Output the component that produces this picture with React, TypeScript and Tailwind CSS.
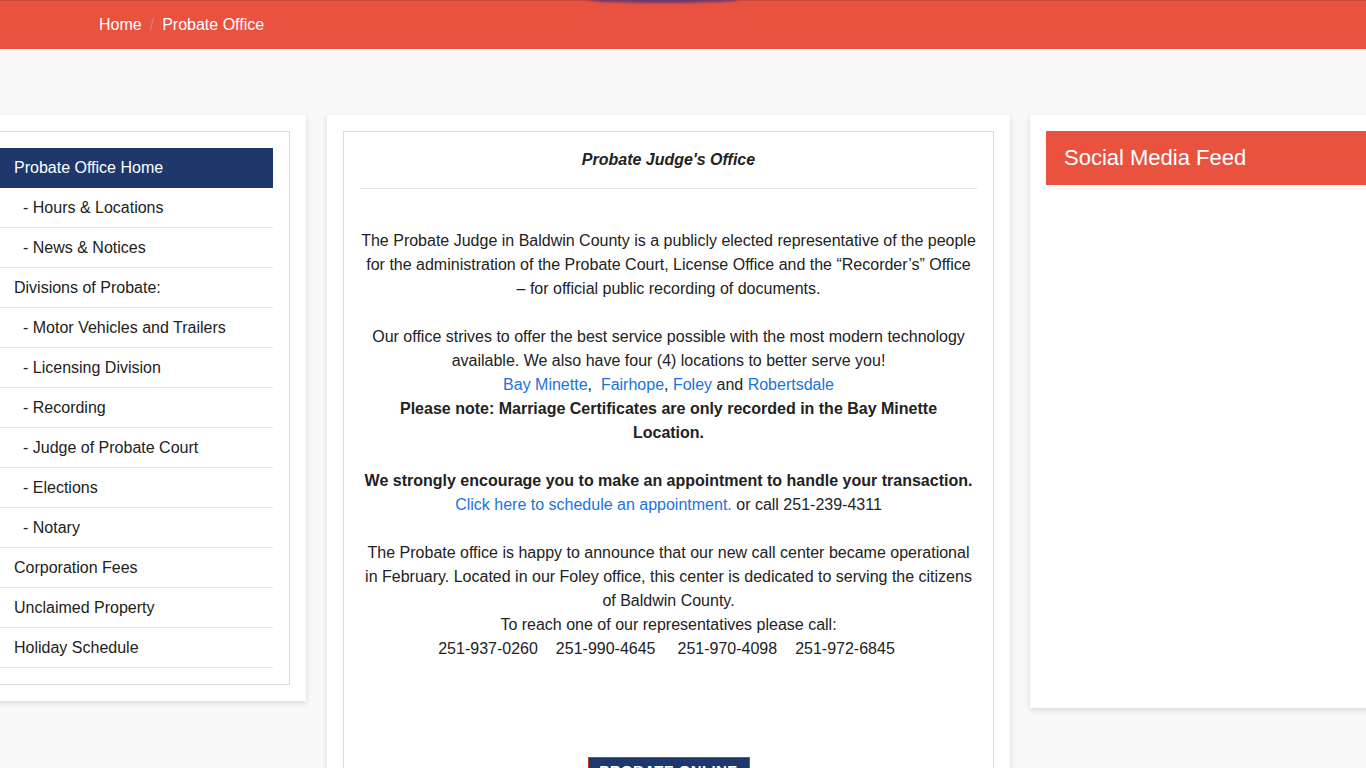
const navItems = [
  { label: "Probate Office Home", sub: false, active: true },
  { label: "Hours & Locations", sub: true },
  { label: "News & Notices", sub: true },
  { label: "Divisions of Probate:", sub: false },
  { label: "Motor Vehicles and Trailers", sub: true },
  { label: "Licensing Division", sub: true },
  { label: "Recording", sub: true },
  { label: "Judge of Probate Court", sub: true },
  { label: "Elections", sub: true },
  { label: "Notary", sub: true },
  { label: "Corporation Fees", sub: false },
  { label: "Unclaimed Property", sub: false },
  { label: "Holiday Schedule", sub: false },
];

const phones = ["251-937-0260", "251-990-4645", "251-970-4098", "251-972-6845"];

const SideNav = () => (
  <aside className="mr-px w-[339px] shrink-0 self-start bg-white p-4 shadow-[0_2px_6px_rgba(0,0,0,0.14)]">
    <div className="border border-[#dcdcdc] py-4 pl-[16px] pr-4">
      <ul>
        {navItems.map((item) => (
          <li
            key={item.label}
            className={
              item.active
                ? "flex h-[40px] items-center bg-[#1f386c] pl-[14px] text-white"
                : "flex h-[40px] items-center border-b border-[#e6e6e6] pl-[14px] text-[#222]"
            }
          >
            {item.sub ? <span className="pl-[9px]">- {item.label}</span> : item.label}
          </li>
        ))}
      </ul>
    </div>
  </aside>
);

const Link = ({ children }: { children: React.ReactNode }) => (
  <a className="text-[#1a73e0]">{children}</a>
);

const MainContent = () => (
  <section className="w-[683px] shrink-0 bg-white p-4 shadow-[0_2px_6px_rgba(0,0,0,0.14)]">
    <div className="min-h-[700px] border border-[#dcdcdc] px-4 pt-4 text-center text-[#222]">
      <h1 className="border-b border-[#e2e2e2] pb-4 text-[16px] font-bold italic leading-6">
        Probate Judge's Office
      </h1>
      <div className="mt-[40px] text-[16px] leading-6">
        <p>
          The Probate Judge in Baldwin County is a publicly elected representative of the people for the
          administration of the Probate Court, License Office and the “Recorder’s” Office – for official
          public recording of documents.
        </p>
        <p className="mt-6 px-2">
          Our office strives to offer the best service possible with the most modern technology available.
          We also have four (4) locations to better serve you!
          <br />
          <Link>Bay Minette</Link>,&nbsp; <Link>Fairhope</Link>, <Link>Foley</Link> and <Link>Robertsdale</Link>
          <br />
          <strong>Please note: Marriage Certificates are only recorded in the Bay Minette Location.</strong>
        </p>
        <p className="mt-6">
          <strong>We strongly encourage you to make an appointment to handle your transaction.</strong>
          <br />
          <Link>Click here to schedule an appointment.</Link> or call 251-239-4311
        </p>
        <p className="mt-6">
          The Probate office is happy to announce that our new call center became operational in February.
          Located in our Foley office, this center is dedicated to serving the citizens of Baldwin County.
          <br />
          To reach one of our representatives please call:
        </p>
        <p className="flex justify-center pr-[4px]">
          {phones.map((p, i) => (
            <span key={p} className={i === 0 ? "" : i === 2 ? "ml-[22px]" : "ml-[18px]"}>
              {p}
            </span>
          ))}
        </p>
      </div>
      <div className="mt-[96px] flex justify-center">
        <button className="flex h-[40px] w-[162px] items-start justify-center border border-[#c0392b] bg-[#1f386c] pt-[3px] text-[15px] font-bold leading-5 tracking-wide text-white">
          PROBATE ONLINE
        </button>
      </div>
    </div>
  </section>
);

const SocialFeed = () => (
  <aside className="h-[593px] w-[340px] shrink-0 bg-white p-4 pr-0 shadow-[0_2px_6px_rgba(0,0,0,0.14)]">
    <div className="flex h-[54px] items-center bg-[#e8523f] pb-[2px] pl-[18px] text-[22px] text-white">
      Social Media Feed
    </div>
  </aside>
);

export default function App() {
  return (
    <div
      className="relative h-[768px] overflow-hidden bg-[#f9f9f9]"
      style={{ fontFamily: '"Liberation Sans", Arial, sans-serif' }}
    >
      <header className="relative h-[49px] border-t border-[#c9483a] bg-[#e8523f]">
        <div className="absolute left-[588px] top-[-4px] h-[6px] w-[150px] rounded-[50%] bg-[#6b3b72] blur-[1px]" />
        <nav className="flex h-full items-center pl-[99px] text-[16px] text-white">
          <span>Home</span>
          <span className="px-[8px] text-[#c98a7a]">/</span>
          <span>Probate Office</span>
        </nav>
      </header>
      <main className="-ml-[33px] flex items-start gap-5 pt-[66px]">
        <SideNav />
        <MainContent />
        <SocialFeed />
      </main>
    </div>
  );
}
